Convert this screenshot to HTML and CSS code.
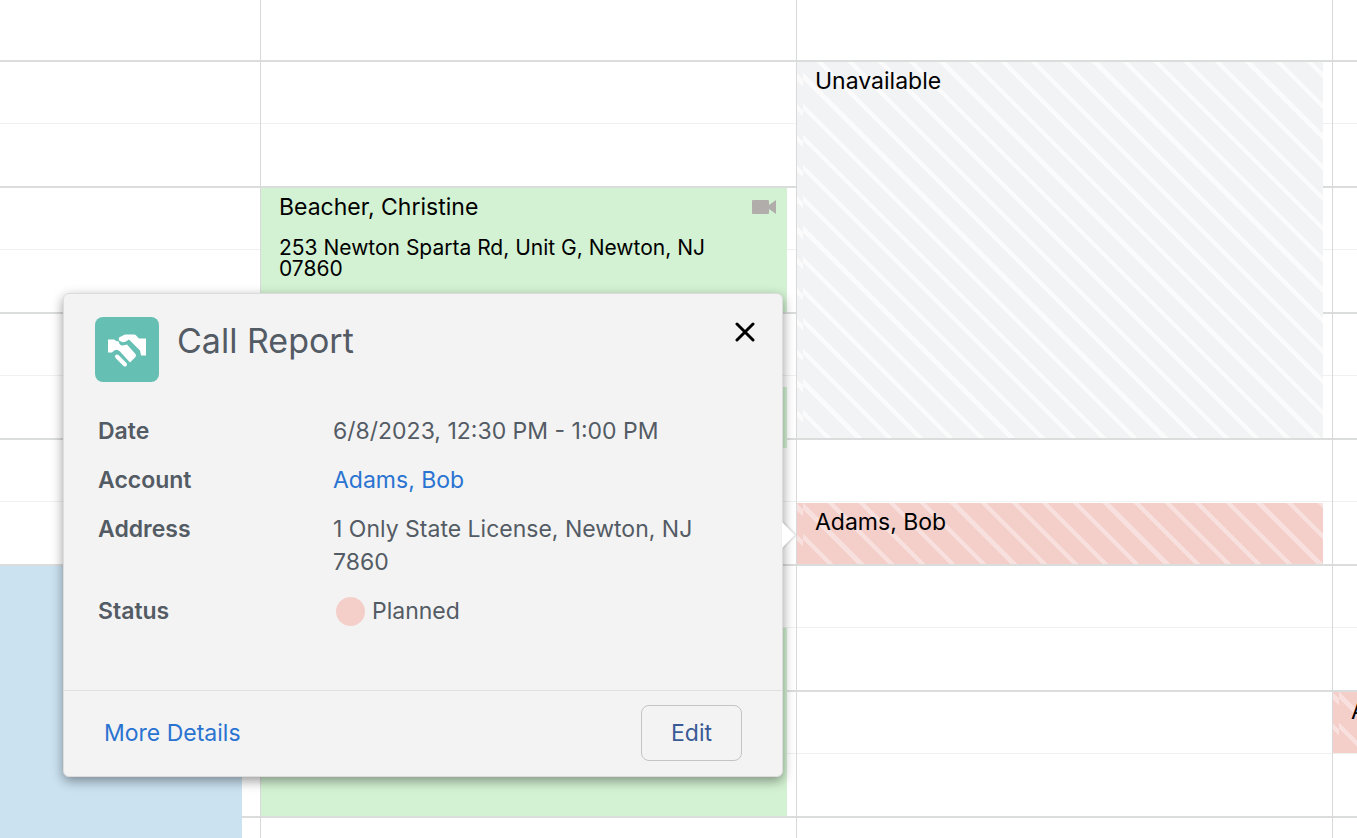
FILE: index.html
```
<!DOCTYPE html>
<html lang="en">
<head>
    <meta charset="UTF-8">
    <meta name="viewport" content="width=device-width, initial-scale=1.0">
    <title>Calendar</title>
    <link rel="stylesheet" href="styles.css">
</head>
<body>
    <main class="calendar">
        <section class="day">
            <div class="event blue"></div>
        </section>

        <section class="day">
            <div class="event green call-1">
                <div class="event-head">
                    <span>Beacher, Christine</span>
                    <svg class="video" viewBox="0 0 26 16" aria-hidden="true">
                        <path d="M2 1h15q1 0 1 1v4l7-5v14l-7-5v4q0 1-1 1H2q-1 0-1-1V2q0-1 1-1z"/>
                    </svg>
                </div>
                <div class="event-address">253 Newton Sparta Rd, Unit G, Newton, NJ 07860</div>
            </div>
            <div class="event green call-2"></div>
            <div class="event green call-3"></div>
        </section>

        <section class="day">
            <div class="event striped unavailable">Unavailable</div>
            <div class="event striped planned call-4">Adams, Bob</div>

            <div class="popup" role="dialog" aria-labelledby="popupTitle">
                <div class="popup-header">
                    <svg class="popup-icon" viewBox="0 0 64 64" aria-hidden="true">
                        <path d="M13 22h6q2 2 5 2 0 4 4 4l4-1 8 9q2 2 0 4l-5 5-10-11q-4-4-8 1h-4z"/>
                        <path class="back" d="M24 20l4-2q1-1 3-1h8q2 0 3 2l2 2h7v17h-5l-1-5-11-11q-5 4-8 2-3-1-2-4z"/>
                        <path class="finger" d="M22 39l8 8"/>
                    </svg>
                    <h2 id="popupTitle">Call Report</h2>
                    <button type="button" class="close" aria-label="Close">
                        <svg viewBox="0 0 20 20"><path d="M2 2l16 16M18 2L2 18"/></svg>
                    </button>
                </div>
                <dl class="details">
                    <dt>Date</dt>
                    <dd>6/8/2023, 12:30 PM - 1:00 PM</dd>
                    <dt>Account</dt>
                    <dd><a href="#">Adams, Bob</a></dd>
                    <dt>Address</dt>
                    <dd>1 Only State License, Newton, NJ 7860</dd>
                    <dt>Status</dt>
                    <dd class="status"><span class="dot"></span>Planned</dd>
                </dl>
                <div class="popup-footer">
                    <a href="#">More Details</a>
                    <button type="button" class="edit">Edit</button>
                </div>
            </div>
        </section>

        <section class="day">
            <div class="event striped planned call-5">Adams, Bob</div>
        </section>
    </main>
</body>
</html>
```
FILE: styles.css
```
* {
    box-sizing: border-box;
}
body {
    margin: 0;
    font-family: Inter, "Liberation Sans", sans-serif;
    font-size: 23px;
    color: #000;
    background-color: #fff;
    overflow: hidden;
}
a {
    color: #2a73d1;
    text-decoration: none;
}
.calendar {
    display: grid;
    grid-template-columns: 261px 1fr 1fr 24px;
    min-height: 100vh;
    overflow: hidden;
    /* one hour is 126px, with a lighter line on the half hour */
    background-image: linear-gradient(#dbdcdc 2px, transparent 2px, transparent 63px, #eff0f0 63px, #eff0f0 64px, transparent 64px);
    background-size: 100% 126px;
    background-position: 0 60px;
}
.day {
    position: relative;
    min-width: 0;
    display: grid;
    grid-template-columns: 100%;
    grid-template-rows: 62px repeat(6, 62px 64px) 1fr;
    border-right: 1px solid #d9d9d9;
}
.day:last-child {
    border-right: 0;
}

/* events */
.event {
    margin-right: 9px;
    margin-bottom: 2px;
    padding: 7px 10px 0 18px;
    line-height: 24px;
    white-space: nowrap;
    overflow: hidden;
}
.blue {
    grid-row: 10 / -1;
    margin-right: 18px;
    margin-bottom: 0;
    background-color: #cbe2f1;
}
.green {
    background-color: #d3f2d3;
}
.call-1 {
    grid-row: 4 / 6;
}
.call-2 {
    grid-row: 7 / 9;
    margin-top: 11px;
    margin-bottom: 54px;
}
.call-3 {
    grid-row: 11 / 14;
}
.event-head {
    display: flex;
    justify-content: space-between;
    align-items: center;
}
.video {
    width: 26px;
    height: 16px;
    fill: #b0adab;
}
.event-address {
    margin-top: 18px;
    padding-right: 40px;
    font-size: 21px;
    line-height: 21px;
    white-space: normal;
}
/* the stripes restart past the 6px left border */
.striped {
    border-left: 6px solid transparent;
    padding-left: 12px;
    background-image:
        repeating-linear-gradient(45deg, var(--base) 0 8%, var(--stripe) 8% 10%),
        repeating-linear-gradient(45deg, var(--base) 0 8%, var(--stripe) 8% 10%);
    background-size: 153px 153px;
    background-position: 0 0, 0 7px;
    background-clip: padding-box, border-box;
}
.unavailable {
    --base: #f2f3f5;
    --stripe: #fbfbfc;
    grid-row: 2 / 8;
    background-position: 0 11px, 0 18px;
}
.planned {
    --base: #f4cfca;
    --stripe: #f7e0dd;
}
.call-4 {
    grid-row: 9;
    margin-top: 1px;
}
.call-5 {
    grid-row: 12;
    margin-right: 0;
    margin-bottom: 1px;
}

/* call report popup */
.popup {
    position: absolute;
    top: 293px;
    right: calc(100% + 14px);
    z-index: 2;
    width: 720px;
    border: 1px solid #dcdcdc;
    border-radius: 6px;
    background-color: #f3f3f3;
    color: #535b64;
    box-shadow: 0 4px 12px rgba(0, 0, 0, 0.4);
}
.popup::after {
    content: "";
    position: absolute;
    top: 228px;
    left: 100%;
    border: 13px solid transparent;
    border-left-color: #fff;
    border-right: 0;
    filter: drop-shadow(1px 0 1px rgba(0, 0, 0, 0.2));
}
.popup-header {
    display: flex;
    align-items: flex-start;
    padding: 23px 27px 0 31px;
}
.popup-icon {
    width: 64px;
    height: 65px;
    border-radius: 8px;
    background-color: #66bfb3;
    fill: #fff;
}
.back {
    stroke: #66bfb3;
    stroke-width: 2;
    paint-order: stroke;
}
.finger {
    stroke: #fff;
    stroke-width: 4;
    stroke-linecap: round;
}
h2 {
    flex: 1;
    margin: 2px 0 0 18px;
    font-size: 34px;
    font-weight: 400;
    line-height: 44px;
}
.close {
    width: 20px;
    height: 20px;
    margin-top: 5px;
    padding: 0;
    border: 0;
    background: none;
    cursor: pointer;
}
.close svg {
    display: block;
    fill: none;
    stroke: #000;
    stroke-width: 3;
    stroke-linecap: round;
}
.details {
    display: grid;
    grid-template-columns: 235px 1fr;
    row-gap: 16px;
    margin: 0;
    padding: 33px 60px 62px 34px;
    line-height: 33px;
}
dt {
    font-weight: 600;
}
dd {
    margin: 0;
}
.status {
    display: flex;
    align-items: center;
    gap: 7px;
}
.dot {
    width: 29px;
    height: 29px;
    margin-left: 3px;
    border-radius: 50%;
    background-color: #f4cfca;
}
.popup-footer {
    display: flex;
    justify-content: space-between;
    align-items: center;
    padding: 14px 40px 15px;
    border-top: 1px solid #e1e1e1;
}
.edit {
    width: 101px;
    height: 56px;
    border: 1px solid #c4c4c4;
    border-radius: 8px;
    background: none;
    color: #3a5a96;
    font: inherit;
    cursor: pointer;
}
```
